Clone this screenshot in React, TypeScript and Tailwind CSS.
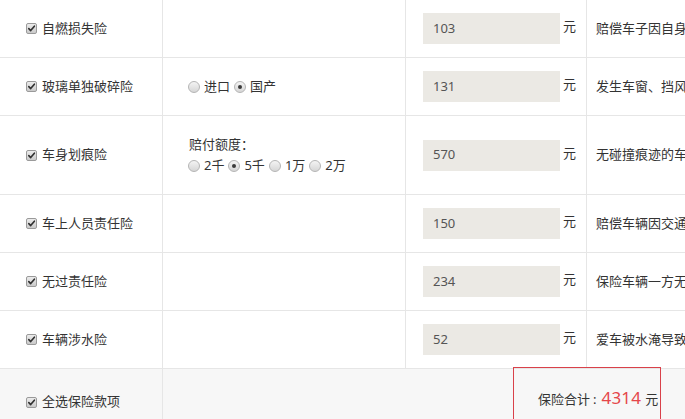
import React from "react";

type Row = {
  name: string;
  price: number;
  desc: string;
  options?: { label: string; choices: string[]; picked: number };
  tall?: boolean;
};

const rows: Row[] = [
  { name: "自燃损失险", price: 103, desc: "赔偿车子因自身原因起火燃烧造成的损失" },
  { name: "玻璃单独破碎险", price: 131, desc: "发生车窗、挡风玻璃单独破碎时赔偿", options: { label: "", choices: ["进口", "国产"], picked: 1 } },
  { name: "车身划痕险", price: 570, desc: "无碰撞痕迹的车身表面油漆单独划伤", options: { label: "赔付额度：", choices: ["2千", "5千", "1万", "2万"], picked: 1 }, tall: true },
  { name: "车上人员责任险", price: 150, desc: "赔偿车辆因交通意外造成车上人员伤亡" },
  { name: "无过责任险", price: 234, desc: "保险车辆一方无过错时对方损失的赔偿" },
  { name: "车辆涉水险", price: 52, desc: "爱车被水淹导致发动机损坏的赔偿" },
];

const font = { fontFamily: '"Noto Sans", "Noto Sans CJK SC", sans-serif' };

function CheckBox() {
  return (
    <span className="mr-[5px] inline-flex h-[11px] w-[11px] shrink-0 items-center justify-center rounded-[2px] border border-[#9a9a9a] bg-gradient-to-b from-[#ececec] to-[#cacaca]">
      <svg viewBox="0 0 10 10" className="h-[9px] w-[9px]" fill="none">
        <path d="M2 5.2 4.1 7.3 8.2 2.4" stroke="#2f2f2f" strokeWidth="1.8" strokeLinecap="round" strokeLinejoin="round" />
      </svg>
    </span>
  );
}

function Radio({ on }: { on: boolean }) {
  return (
    <span className="mr-[4px] inline-flex h-[12px] w-[12px] shrink-0 items-center justify-center rounded-full border border-[#b5b5b5] bg-gradient-to-b from-[#f4f4f4] to-[#d6d6d6]">
      {on ? <span className="h-[4px] w-[4px] rounded-full bg-[#3a3a3a]" /> : null}
    </span>
  );
}

function Choices({ choices, picked }: { choices: string[]; picked: number }) {
  return (
    <div className="flex items-center">
      {choices.map((c, i) => (
        <span key={c} className="mr-[4px] flex items-center">
          <Radio on={i === picked} />
          {c}
        </span>
      ))}
    </div>
  );
}

export default function App() {
  return (
    <div className="h-[419px] w-[685px] overflow-hidden bg-white text-[13px] text-[#333]" style={font}>
      <div className="w-[900px]">
        {rows.map((row) => (
          <div
            key={row.name}
            className={`grid grid-cols-[163px_243px_181px_1fr] border-b border-[#e6e6e6] ${row.tall ? "h-[79px]" : "h-[58px]"}`}
          >
            <div className="flex items-center border-r border-[#e6e6e6] pl-[26px]">
              <CheckBox />
              {row.name}
            </div>
            <div className="flex flex-col justify-center border-r border-[#e6e6e6] pl-[25px]">
              {row.options?.label ? <div className="mb-[2px] pl-[1px]">{row.options.label}</div> : null}
              {row.options ? <Choices choices={row.options.choices} picked={row.options.picked} /> : null}
            </div>
            <div className="flex items-center border-r border-[#e6e6e6] pl-[17px]">
              <div className="flex h-[31px] w-[137px] items-center bg-[#ebe9e4] pl-[10px] text-[#555]">{row.price}</div>
              <span className="mb-[3px] ml-[3px]">元</span>
            </div>
            <div className="flex items-center overflow-hidden whitespace-nowrap pl-[9px]">{row.desc}</div>
          </div>
        ))}
        <div className="grid h-[60px] grid-cols-[163px_1fr] bg-[#f7f7f7]">
          <div className="flex items-center border-r border-[#e6e6e6] pb-[2px] pl-[26px]">
            <CheckBox />
            全选保险款项
          </div>
          <div className="pl-[350px]">
            <div className="-mt-[2px] flex h-[70px] w-[148px] items-start border border-[#d9414a] pl-[24px] pt-[21px]">
              <div className="flex items-baseline whitespace-nowrap leading-none">
                <span>保险合计</span>
                <span className="ml-[3px] mr-[5px]">:</span>
                <span className="text-[17px] tracking-[0.2px] text-[#e5464a]">4314</span>
                <span className="ml-[4px]">元</span>
              </div>
            </div>
          </div>
        </div>
      </div>
    </div>
  );
}
